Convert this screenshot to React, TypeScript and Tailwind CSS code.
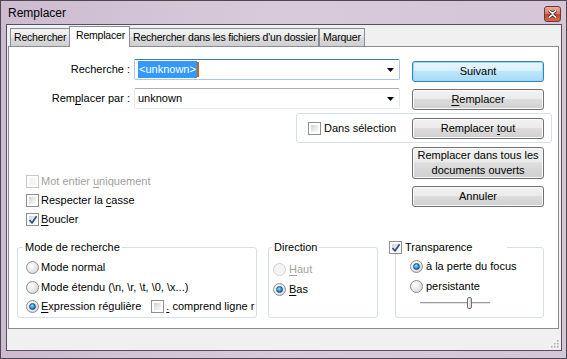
import type { ReactNode } from 'react'

// ── Small Win7-style controls ──────────────────────────────────────────────

function Checkbox({ checked = false, disabled = false }: { checked?: boolean; disabled?: boolean }) {
  return (
    <span
      className={`relative block flex-shrink-0 w-[13px] h-[13px] border p-[2px] bg-white ${
        disabled ? 'border-[#c8c8c8]' : 'border-[#8e8f8f]'
      }`}
    >
      <span
        className={`block w-full h-full ${
          disabled
            ? 'bg-[#f4f4f4]'
            : 'bg-[linear-gradient(135deg,#cfd1d4_0%,#e9eaeb_55%,#f8f8f8_100%)]'
        }`}
      />
      {checked && (
        <svg className="absolute left-[1px] top-[1px]" width="10" height="10" viewBox="0 0 10 10">
          <path d="M1.5 5 L4 7.8 L8.6 1.2" fill="none" stroke="#2f4f8f" strokeWidth="1.7" />
        </svg>
      )}
    </span>
  )
}

function Radio({ checked = false, disabled = false }: { checked?: boolean; disabled?: boolean }) {
  return (
    <span
      className={`relative flex-shrink-0 w-[13px] h-[13px] rounded-full border flex items-center justify-center ${
        disabled
          ? 'border-[#cfcfcf] bg-[#f4f4f4]'
          : 'border-[#8e8f8f] bg-[radial-gradient(circle_at_35%_35%,#ffffff_0%,#e6e6e6_55%,#c9c9c9_100%)]'
      }`}
    >
      {checked && (
        <span className="w-[7px] h-[7px] rounded-full border border-[#1d4e86] bg-[radial-gradient(circle_at_40%_35%,#9fe0ff_0%,#2a8fd4_55%,#0d4b8c_100%)]" />
      )}
    </span>
  )
}

function Button({ children, className = '', primary = false }: { children: ReactNode; className?: string; primary?: boolean }) {
  return (
    <div
      className={`w-[132px] flex items-center justify-center text-center whitespace-nowrap leading-[15px] rounded-[3px] border ${
        primary
          ? 'border-[#3c7fb1] bg-[linear-gradient(#eaf6fd_0%,#d9f0fc_45%,#bee6fd_50%,#a7d9f5_100%)] shadow-[inset_0_0_0_1px_#8fe0fc]'
          : 'border-[#707070] bg-[linear-gradient(#f2f2f2_0%,#ebebeb_45%,#dddddd_50%,#cfcfcf_100%)] shadow-[inset_0_0_0_1px_#fbfbfb]'
      } ${className}`}
    >
      {children}
    </div>
  )
}

function Combo({ children, focused = false }: { children: ReactNode; focused?: boolean }) {
  return (
    <div
      className={`w-[266px] h-[21px] flex items-center bg-white border rounded-[2px] ${
        focused
          ? 'border-[#a9c8e4] border-t-[#3d7bad]'
          : 'border-[#e3e9ef] border-t-[#abadb3]'
      }`}
    >
      <div className="flex-1 pl-[3px] flex items-center whitespace-nowrap">{children}</div>
      <svg className="mr-[5px]" width="7" height="4" viewBox="0 0 7 4">
        <path d="M0 0 H7 L3.5 4 Z" fill="#000" />
      </svg>
    </div>
  )
}

function Tab({ children, active = false, className = '' }: { children: ReactNode; active?: boolean; className?: string }) {
  return (
    <div
      className={`flex items-center whitespace-nowrap text-[10.5px] tracking-[-0.2px] border border-[#898c95] border-b-0 ${
        active
          ? 'h-[21px] bg-white pl-[6px] pb-[2px] z-10 relative -mb-px'
          : 'h-[18px] pl-[3px] bg-[linear-gradient(#f2f2f2_0%,#ebebeb_45%,#dddddd_50%,#cfcfcf_100%)] pt-[1px]'
      } ${className}`}
    >
      {children}
    </div>
  )
}

const U = ({ children }: { children: ReactNode }) => <span className="underline underline-offset-[2px]">{children}</span>

// ── Main ───────────────────────────────────────────────────────────────────

export default function App() {
  return (
    <div className="w-[567px] h-[359px] border border-[#4d4752] bg-[linear-gradient(90deg,#cdbcd1_0%,#d8cadb_50%,#d4c6d7_100%)] flex flex-col font-['Liberation_Sans',Arial,sans-serif] text-[11px] text-black select-none">
      {/* Title bar */}
      <div className="h-[23px] flex items-center justify-between pl-[7px] pr-[5px] flex-shrink-0">
        <span className="text-[12px] pt-[1px]">Remplacer</span>
        <div className="w-[17px] h-[16px] mt-[3px] rounded-[3px] border border-[#6a3a32] bg-[linear-gradient(#eab0a0_0%,#d9745c_50%,#c2432a_51%,#d86a4c_100%)] flex items-center justify-center">
          <svg width="9" height="8" viewBox="0 0 9 8">
            <path d="M1 0.5 L4.5 3.5 L8 0.5 M1 7.5 L4.5 4.5 L8 7.5" stroke="#3a2a2a" strokeWidth="3" fill="none" />
            <path d="M1 0.5 L4.5 3.5 L8 0.5 M1 7.5 L4.5 4.5 L8 7.5" stroke="#ffffff" strokeWidth="1.6" fill="none" />
          </svg>
        </div>
      </div>

      {/* Client area */}
      <div className="ml-[5px] w-[556px] h-[327px] border border-[#55505a] bg-[#f0f0f0] flex flex-col relative">
        {/* Tabs */}
        <div className="flex items-end pl-[3px] pt-[2px] h-[21px]">
          <Tab className="w-[60px]">Rechercher</Tab>
          <Tab active className="w-[61px] -ml-px">Remplacer</Tab>
          <Tab className="w-[190px] -ml-px">Rechercher dans les fichiers d'un dossier</Tab>
          <Tab className="w-[46px] ml-0">Marquer</Tab>
        </div>

        {/* Panel */}
        <div className="ml-px w-[551px] h-[283px] border border-[#898c95] bg-white flex flex-col whitespace-nowrap">
          {/* Recherche */}
          <div className="flex items-start mt-[12px]">
            <div className="w-[121px] h-[21px] flex items-center justify-end">Recherche :</div>
            <div className="ml-[4px]">
              <Combo focused>
                <span className="bg-[#3399ff] text-white px-px">&lt;unknown&gt;</span>
                <span className="w-[2px] h-[15px] bg-[#c86414]" />
              </Combo>
            </div>
            <Button primary className="ml-[12px] mt-[2px] h-[21px]">Suivant</Button>
          </div>

          {/* Remplacer par */}
          <div className="flex items-start mt-[6px]">
            <div className="w-[121px] h-[21px] flex items-center justify-end">
              <span>
                Rem<U>p</U>lacer par :
              </span>
            </div>
            <div className="ml-[4px]">
              <Combo>unknown</Combo>
            </div>
            <Button className="ml-[12px] mt-[1px] h-[21px]">
              <span>
                <U>R</U>emplacer
              </span>
            </Button>
          </div>

          {/* Dans sélection */}
          <div className="mt-[3px] ml-[287px] w-[256px] h-[30px] border border-[#d5dfe5] rounded-[3px] flex items-center pl-[11px] pr-[7px]">
            <Checkbox />
            <span className="ml-[3px]">Dans sélection</span>
            <Button className="ml-auto h-[21px]">
              <span>
                Remplacer <U>t</U>out
              </span>
            </Button>
          </div>

          {/* Options + actions */}
          <div className="flex">
            <div className="w-[403px] pl-[17px] pt-[29px] flex flex-col">
              <div className="h-[19px] flex items-center text-[#a0a0a0]">
                <Checkbox disabled />
                <span className="ml-[2px]">
                  Mot entier <U>u</U>niquement
                </span>
              </div>
              <div className="h-[19px] flex items-center">
                <Checkbox />
                <span className="ml-[2px]">
                  Respecter la <U>c</U>asse
                </span>
              </div>
              <div className="h-[19px] flex items-center">
                <Checkbox checked />
                <span className="ml-[2px]">
                  <U>B</U>oucler
                </span>
              </div>
            </div>
            <div className="flex flex-col pt-[4px]">
              <Button className="h-[32px]">
                Remplacer dans tous les
                <br />
                documents ouverts
              </Button>
              <Button className="h-[21px] mt-[7px]">Annuler</Button>
            </div>
          </div>

          {/* Group boxes */}
          <div className="flex mt-[11px]">
            <fieldset className="ml-[8px] w-[240px] min-w-0 h-[78px] border border-[#d5dfe5] rounded-[3px] pl-[8px]">
              <legend className="-ml-[3px] px-[2px] leading-[14px]">Mode de recherche</legend>
              <div className="mt-[3px] flex flex-col overflow-hidden pr-[4px]">
                <div className="h-[20px] flex items-center">
                  <Radio />
                  <span className="ml-[2px]">Mode normal</span>
                </div>
                <div className="h-[20px] flex items-center">
                  <Radio />
                  <span className="ml-[2px]">Mode étendu (\n, \r, \t, \0, \x...)</span>
                </div>
                <div className="h-[19px] flex items-center">
                  <Radio checked />
                  <span className="ml-[2px]">
                    <U>E</U>xpression régulière
                  </span>
                  <span className="ml-[10px]">
                    <Checkbox />
                  </span>
                  <span className="ml-[2px]">
                    <U>.</U> comprend ligne r
                  </span>
                </div>
              </div>
            </fieldset>

            <fieldset className="ml-[11px] w-[110px] min-w-0 h-[78px] border border-[#d5dfe5] rounded-[3px] pl-[4px]">
              <legend className="-ml-px px-[2px] leading-[14px]">Direction</legend>
              <div className="mt-[5px] flex flex-col">
                <div className="h-[20px] flex items-center text-[#a0a0a0]">
                  <Radio disabled />
                  <span className="ml-[3px]">
                    <U>H</U>aut
                  </span>
                </div>
                <div className="h-[20px] flex items-center">
                  <Radio checked />
                  <span className="ml-[3px]">
                    <U>B</U>as
                  </span>
                </div>
              </div>
            </fieldset>

            <fieldset className="ml-[17px] w-[149px] min-w-0 h-[78px] border border-[#d5dfe5] rounded-[3px] pl-[14px]">
              <legend className="-ml-[21px] w-[118px] leading-[14px] bg-white flex items-center">
                <Checkbox checked />
                <span className="ml-[3px]">Transparence</span>
              </legend>
              <div className="mt-[2px] flex flex-col">
                <div className="h-[20px] flex items-center">
                  <Radio checked />
                  <span className="ml-[3px]">à la perte du focus</span>
                </div>
                <div className="h-[20px] flex items-center">
                  <Radio />
                  <span className="ml-[3px]">persistante</span>
                </div>
                <div className="h-[14px] ml-[10px] w-[70px] flex items-center relative">
                  <div className="w-full h-[2px] border-t border-[#9c9c9c] border-b-[#ffffff] bg-[#e4e4e4]" />
                  <div className="absolute left-[47px] top-[1px] w-[5px] h-[12px] rounded-[2px] border border-[#707070] bg-[linear-gradient(90deg,#f7f7f7,#d6d6d6)]" />
                </div>
              </div>
            </fieldset>
          </div>
        </div>

        {/* Resize grip */}
        <svg className="absolute right-[2px] bottom-[2px]" width="8" height="8" viewBox="0 0 8 8">
          {[
            [6, 0],
            [6, 3],
            [3, 3],
            [6, 6],
            [3, 6],
            [0, 6],
          ].map(([x, y]) => (
            <rect key={`${x}-${y}`} x={x} y={y} width="1.5" height="1.5" fill="#a8a8a8" />
          ))}
        </svg>
      </div>
    </div>
  )
}
